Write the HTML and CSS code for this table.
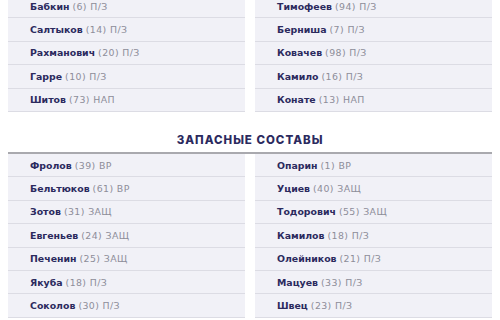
FILE: index.html
```html
<!DOCTYPE html>
<html lang="ru">
<head>
<meta charset="utf-8">
<link rel="stylesheet" href="styles.css">
</head>
<body>
<div class="page">
  <div class="grid top">
    <ul class="list">
      <li class="row"><b>Бабкин</b><span>(6) П/З</span></li>
      <li class="row"><b>Салтыков</b><span>(14) П/З</span></li>
      <li class="row"><b>Рахманович</b><span>(20) П/З</span></li>
      <li class="row"><b>Гарре</b><span>(10) П/З</span></li>
      <li class="row"><b>Шитов</b><span>(73) НАП</span></li>
    </ul>
    <ul class="list">
      <li class="row"><b>Тимофеев</b><span>(94) П/З</span></li>
      <li class="row"><b>Берниша</b><span>(7) П/З</span></li>
      <li class="row"><b>Ковачев</b><span>(98) П/З</span></li>
      <li class="row"><b>Камило</b><span>(16) П/З</span></li>
      <li class="row"><b>Конате</b><span>(13) НАП</span></li>
    </ul>
  </div>
  <h2 class="title">ЗАПАСНЫЕ СОСТАВЫ</h2>
  <div class="divider"></div>
  <div class="grid">
    <ul class="list">
      <li class="row"><b>Фролов</b><span>(39) ВР</span></li>
      <li class="row"><b>Бельтюков</b><span>(61) ВР</span></li>
      <li class="row"><b>Зотов</b><span>(31) ЗАЩ</span></li>
      <li class="row"><b>Евгеньев</b><span>(24) ЗАЩ</span></li>
      <li class="row"><b>Печенин</b><span>(25) ЗАЩ</span></li>
      <li class="row"><b>Якуба</b><span>(18) П/З</span></li>
      <li class="row"><b>Соколов</b><span>(30) П/З</span></li>
    </ul>
    <ul class="list">
      <li class="row"><b>Опарин</b><span>(1) ВР</span></li>
      <li class="row"><b>Уциев</b><span>(40) ЗАЩ</span></li>
      <li class="row"><b>Тодорович</b><span>(55) ЗАЩ</span></li>
      <li class="row"><b>Камилов</b><span>(18) П/З</span></li>
      <li class="row"><b>Олейников</b><span>(21) П/З</span></li>
      <li class="row"><b>Мацуев</b><span>(33) П/З</span></li>
      <li class="row"><b>Швец</b><span>(23) П/З</span></li>
    </ul>
  </div>
</div>
</body>
</html>
```
FILE: styles.css
```css
html, body {
  margin: 0;
  padding: 0;
  background: #ffffff;
  overflow: hidden;
}
.page {
  padding: 0 8px;
  font-family: "Inter", "Noto Sans", sans-serif;
}
.grid {
  display: grid;
  grid-template-columns: 1fr 1fr;
  column-gap: 10px;
}
.top {
  margin-top: -5px;
}
.list {
  list-style: none;
  margin: 0;
  padding: 0;
}
.row {
  box-sizing: border-box;
  height: 23.4px;
  display: flex;
  align-items: center;
  padding-left: 22px;
  background: #f1f1f7;
  border-bottom: 1.5px solid #dcdce4;
  font-family: "DejaVu Sans", sans-serif;
  font-size: 9.4px;
  white-space: nowrap;
}
.row b {
  font-weight: 700;
  color: #2b2a5e;
}
.row span {
  margin-left: 3px;
  letter-spacing: 0.4px;
  color: #8d8d99;
  font-weight: 400;
}
.title {
  margin: 0;
  padding: 21px 0 5px;
  line-height: 14px;
  text-align: center;
  font-size: 11.5px;
  font-weight: 800;
  letter-spacing: 1px;
  color: #2b2a5e;
}
.divider {
  height: 2px;
  background: #a9a9ae;
}
```
